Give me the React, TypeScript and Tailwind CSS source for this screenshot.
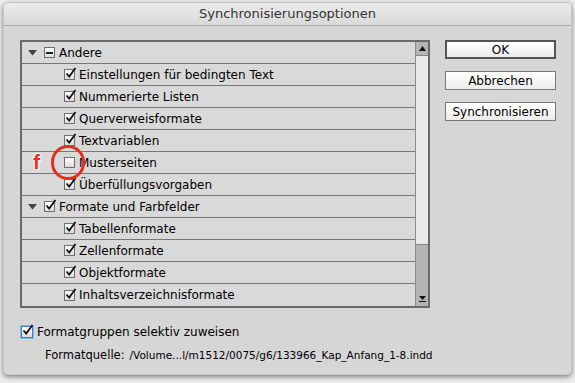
import React from "react";

const font = { fontFamily: '"DejaVu Sans", "Liberation Sans", sans-serif' };

function Check({ checked, minus }: { checked?: boolean; minus?: boolean }) {
  return (
    <div className="relative w-[11px] h-[11px] shrink-0 border border-[#6e6e6e] bg-gradient-to-b from-[#fdfdfd] to-[#dcdcdc]">
      {checked && (
        <svg className="absolute left-[0px] top-[-3px]" width="12" height="12" viewBox="0 0 12 12">
          <path d="M1.5 6.5 L4.2 9.5 L10.5 1" fill="none" stroke="#111" strokeWidth="1.8" />
        </svg>
      )}
      {minus && <div className="absolute left-[1px] right-[1px] top-[4px] h-[2px] bg-[#222]" />}
    </div>
  );
}

function Tri() {
  return (
    <svg width="9" height="6" viewBox="0 0 9 6" className="shrink-0">
      <path d="M0 0 L9 0 L4.5 5.5 Z" fill="#444" />
    </svg>
  );
}

function Row({ children }: { children: React.ReactNode }) {
  return (
    <div className="h-[22px] flex items-center border-b border-[#777] text-[12px] text-black">{children}</div>
  );
}

function Group({ label, checked, minus }: { label: string; checked?: boolean; minus?: boolean }) {
  return (
    <Row>
      <div className="pl-[6px] w-[22px]"><Tri /></div>
      <Check checked={checked} minus={minus} />
      <span className="ml-[4px]">{label}</span>
    </Row>
  );
}

function Item({ label, checked = true, extra }: { label: string; checked?: boolean; extra?: React.ReactNode }) {
  return (
    <Row>
      <div className="relative w-[42px] shrink-0 h-full">{extra}</div>
      <Check checked={checked} />
      <span className="ml-[4px]">{label}</span>
    </Row>
  );
}

function Btn({ label, def }: { label: string; def?: boolean }) {
  return (
    <div
      className={`h-[19px] flex items-center justify-center text-[12px] text-black bg-gradient-to-b from-[#ffffff] to-[#ececec] ${
        def ? "border-2 border-[#555]" : "border border-[#777]"
      }`}
    >
      {label}
    </div>
  );
}

export default function App() {
  return (
    <div className="w-[575px] h-[383px] bg-[#ececec] pt-[2px] px-[3px]" style={font}>
      <div className="w-[569px] h-[373px] rounded-[5px] bg-[#d6d6d6] shadow-[0_2px_5px_rgba(0,0,0,0.45)] border border-[#c4c4c4] overflow-hidden flex flex-col">
        <div className="h-[23px] shrink-0 bg-gradient-to-b from-[#ebebeb] to-[#d9d9d9] border-b border-[#a9a9a9] flex items-center justify-center text-[13px] text-[#333]">
          Synchronisierungsoptionen
        </div>
        <div className="flex pl-[16px] pt-[14px]">
          <div className="w-[410px] h-[268px] border-2 border-[#6a6a6a] flex bg-[#d9d9d9]">
            <div className="flex-1 overflow-hidden">
              <Group label="Andere" minus />
              <Item label="Einstellungen für bedingten Text" />
              <Item label="Nummerierte Listen" />
              <Item label="Querverweisformate" />
              <Item label="Textvariablen" />
              <Item
                label="Musterseiten"
                checked={false}
                extra={
                  <>
                    <span
                      className="absolute left-[11px] top-[-1px] text-[21px] font-bold text-[#e8321e] leading-none"
                      style={{ fontFamily: '"Liberation Sans", sans-serif', textShadow: "0 0 2px #fff, 0 0 2px #fff, 0 0 1px #fff, 1px 1px 0 #fff, -1px -1px 0 #fff" }}
                    >
                      f
                    </span>
                    <div className="absolute z-10 left-[29px] top-[-7px] w-[34px] h-[35px] rounded-full border-[3px] border-[#e2301c]" />
                  </>
                }
              />
              <Item label="Überfüllungsvorgaben" />
              <Group label="Formate und Farbfelder" checked />
              <Item label="Tabellenformate" />
              <Item label="Zellenformate" />
              <Item label="Objektformate" />
              <div className="h-[22px] flex items-center text-[12px] text-black">
                <div className="w-[42px] shrink-0" />
                <Check checked />
                <span className="ml-[4px]">Inhaltsverzeichnisformate</span>
              </div>
            </div>
            <div className="w-[13px] border-l border-[#8a8a8a] flex flex-col bg-[#e9e9e9]">
              <div className="h-[14px] bg-[#b4b4b4] border-b border-[#888] flex items-center justify-center">
                <svg width="7" height="5" viewBox="0 0 7 5"><path d="M0 5 L7 5 L3.5 0 Z" fill="#111" /></svg>
              </div>
              <div className="flex-1" />
              <div className="h-[62px] bg-[#b4b4b4] border-t border-[#888] flex items-end justify-center pb-[4px]">
                <svg width="7" height="6" viewBox="0 0 7 6"><path d="M0 0 L7 0 L3.5 4 Z" fill="#111" /><rect x="0" y="5" width="7" height="1" fill="#111" /></svg>
              </div>
            </div>
          </div>
          <div className="ml-[15px] w-[111px] flex flex-col">
            <Btn label="OK" def />
            <div className="h-[12px]" />
            <Btn label="Abbrechen" />
            <div className="h-[12px]" />
            <Btn label="Synchronisieren" />
          </div>
        </div>
        <div className="pl-[17px] mt-[15px] flex items-center text-[12px] text-black">
          <div className="relative w-[12px] h-[12px] border border-[#3d7fc6] bg-gradient-to-b from-[#fdfdfd] to-[#dcdcdc] shadow-[0_0_0_1px_#8fb7e3]">
            <svg className="absolute left-[0px] top-[-3px]" width="12" height="12" viewBox="0 0 12 12">
              <path d="M1.5 6.5 L4.2 9.5 L10.5 1" fill="none" stroke="#111" strokeWidth="1.8" />
            </svg>
          </div>
          <span className="ml-[4px]">Formatgruppen selektiv zuweisen</span>
        </div>
        <div className="pl-[41px] mt-[6px] flex items-center text-black">
          <span className="text-[11.5px]">Formatquelle:</span>
          <span className="ml-[5px] text-[10.5px]">/Volume...l/m1512/0075/g6/133966_Kap_Anfang_1-8.indd</span>
        </div>
      </div>
    </div>
  );
}
